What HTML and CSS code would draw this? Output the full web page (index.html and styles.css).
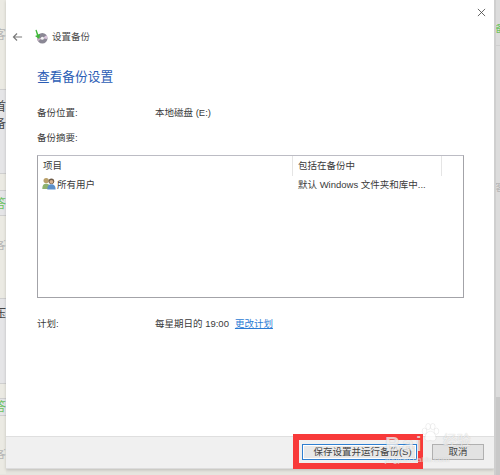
FILE: index.html
```html
<!DOCTYPE html>
<html lang="zh">
<head>
<meta charset="utf-8">
<title>设置备份</title>
<link rel="stylesheet" href="styles.css">
</head>
<body>
<div class="desktop">
  <div class="gutter gutter-left">
    <div class="seg beige h25"></div>
    <div class="seg beige h20 faint"><span>客</span></div>
    <div class="seg beige h45 line"></div>
    <div class="seg grey h8"></div>
    <div class="seg grey h17 dark"><span>首</span></div>
    <div class="seg grey h17 dark"><span>备</span></div>
    <div class="seg grey h42 line"></div>
    <div class="seg beige h17 line"></div>
    <div class="seg grey h5"></div>
    <div class="seg grey h16 green"><span>答</span></div>
    <div class="seg grey h4 line"></div>
    <div class="seg beige h18"></div>
    <div class="seg beige h6"></div>
    <div class="seg beige h10 faint"><span>客</span></div>
    <div class="seg beige h49 line"></div>
    <div class="seg grey h8"></div>
    <div class="seg grey h14 dark"><span>压</span></div>
    <div class="seg grey h63 line"></div>
    <div class="seg beige h15 line"></div>
    <div class="seg grey h16 green"><span>答</span></div>
    <div class="seg grey h1 line"></div>
    <div class="seg beige h33"></div>
    <div class="seg beige h10 faint"><span>客</span></div>
    <div class="seg beige h15"></div>
  </div>

  <main class="dialog">
    <div class="titlebar">
      <svg class="close" viewBox="0 0 10 10" aria-label="关闭"><path d="M1 1l8 8M9 1l-8 8"/></svg>
    </div>
    <header class="nav">
      <svg class="back" viewBox="0 0 12 10" aria-label="返回"><path d="M11 5H2M5.500 1.200L1.600 5l3.900 3.800"/></svg>
      <svg class="backup-icon" viewBox="0 0 14 15" aria-hidden="true">
        <circle cx="8.300" cy="9.300" r="5.200" fill="#8a8794"/>
        <path d="M8.300 9.300L12.500 6.200A5.200 5.200 0 0 1 13.400 10z" fill="#d9c6dc"/>
        <path d="M8.300 9.300L4 12.200A5.200 5.200 0 0 1 3.200 8.600z" fill="#c7b0c4"/>
        <circle cx="8.300" cy="9.300" r="1.500" fill="#f4f4f4"/>
        <path d="M1.400 1l1.500 5.300L1 7l4.200 3 .8-5.300-1.700.9L2.600.7z" fill="#3fb83a"/>
      </svg>
      <span class="nav-title">设置备份</span>
    </header>

    <section class="content">
      <h1 class="heading">查看备份设置</h1>
      <div class="field loc">
        <span class="label">备份位置:</span>
        <span class="value">本地磁盘 (E:)</span>
      </div>
      <div class="field summary"><span class="label">备份摘要:</span></div>

      <div class="listbox">
        <div class="list-head">
          <div class="col col-a">项目</div>
          <div class="col col-b">包括在备份中</div>
          <div class="col col-c"></div>
        </div>
        <div class="list-row">
          <div class="col col-a users">
            <svg class="users-icon" viewBox="0 0 14 13" aria-hidden="true">
              <circle cx="4.200" cy="3.600" r="2.700" fill="#b9a06a"/>
              <path d="M.3 12c0-4 1.600-5.200 3.900-5.200S8 8 8 12z" fill="#8fb26e"/>
              <circle cx="9.400" cy="4.300" r="2.800" fill="#6d5a48"/>
              <circle cx="9.400" cy="4.800" r="1.900" fill="#d3b08e"/>
              <path d="M5.300 12.600c0-4 1.600-5.400 4.100-5.400s4.200 1.400 4.200 5.400z" fill="#5b8fc9"/>
            </svg>
            <span>所有用户</span>
          </div>
          <div class="col col-b">默认 Windows 文件夹和库中...</div>
        </div>
      </div>

      <div class="field plan">
        <span class="label">计划:</span>
        <span class="value">每星期日的 19:00<a class="link" href="#">更改计划</a></span>
      </div>
    </section>

    <footer class="footer">
      <div class="mark">
        <button class="btn btn-primary" type="button">保存设置并运行备份(S)</button>
      </div>
      <button class="btn btn-cancel" type="button">取消</button>
      <div class="watermark">
        <div class="wm-top">
          <span class="wm-latin">Bai</span>
          <svg class="wm-paw" viewBox="0 0 24 24" aria-hidden="true">
            <ellipse cx="6" cy="10" rx="2.600" ry="3.400"/><ellipse cx="10" cy="5" rx="2.600" ry="3.400"/>
            <ellipse cx="15" cy="5" rx="2.600" ry="3.400"/><ellipse cx="19" cy="10" rx="2.600" ry="3.400"/>
            <path d="M12.500 10c-3 0-6 4-6 7.500s3 3.500 6 2.500c3 1 6 1 6-2.500s-3-7.500-6-7.500z"/>
          </svg>
          <span class="wm-cjk">经验</span>
        </div>
        <div class="wm-sub">jingyan.baidu.com</div>
      </div>
    </footer>
  </main>

  <div class="gutter gutter-right">
    <div class="seg rail h24"></div>
    <div class="seg rail h10 green-r"><span>备</span></div>
    <div class="seg rail h12 line"></div>
    <div class="seg rail h137"></div>
    <div class="seg rail h10 faint-r"><span>客</span></div>
    <div class="seg rail h204"></div>
    <div class="seg rail-dark h78"></div>
  </div>
</div>
</body>
</html>
```

FILE: styles.css
```css
* { box-sizing: border-box; }
html, body { margin: 0; padding: 0; }
body {
  width: 500px;
  height: 475px;
  overflow: hidden;
  font-family: "Liberation Sans", "Noto Sans CJK SC", sans-serif;
  font-size: 9.5px;
  color: #3a3a3a;
}

.desktop {
  display: flex;
  align-items: flex-start;
  width: 500px;
  height: 475px;
  background: #e6e5df;
}

/* Page behind the dialog */
.gutter {
  width: 6px;
  height: 475px;
  flex: none;
  overflow: hidden;
}
.gutter-right { border-left: 2px solid #cfcfcf; }
.seg {
  display: flex;
  align-items: center;
  overflow: hidden;
  font-size: 12px;
  line-height: 1;
}
.seg span { flex: none; margin-left: -6px; }
.gutter-right .seg span { margin-left: -1px; font-size: 10px; }
.beige { background: #ebeae3; }
.grey { background: #e5e5e7; }
.rail { background: #dcdcdc; }
.rail-dark { background: #c8c8c8; }
.line { border-bottom: 1px solid #cfcfcf; }
.faint { color: #b5b5b5; }
.dark { color: #444; }
.green { color: #6cc35f; }
.green-r { color: #6cc35f; }
.faint-r { color: #b5b5b5; }
.h1 { height: 1px; }
.h4 { height: 4px; }
.h5 { height: 5px; }
.h6 { height: 6px; }
.h8 { height: 8px; }
.h10 { height: 10px; }
.h12 { height: 12px; }
.h14 { height: 14px; }
.h15 { height: 15px; }
.h16 { height: 16px; }
.h17 { height: 17px; }
.h18 { height: 18px; }
.h20 { height: 20px; }
.h24 { height: 24px; }
.h25 { height: 25px; }
.h33 { height: 33px; }
.h42 { height: 42px; }
.h45 { height: 45px; }
.h49 { height: 49px; }
.h63 { height: 63px; }
.h78 { height: 78px; }
.h137 { height: 137px; }
.h204 { height: 204px; }

/* Dialog */
.dialog {
  width: 488px;
  height: 469px;
  flex: none;
  display: flex;
  flex-direction: column;
  background: #fff;
  box-shadow: 0 1px 3px rgba(0, 0, 0, .18);
}
.titlebar {
  height: 29px;
  flex: none;
  display: flex;
  justify-content: flex-end;
  padding: 8px 8px 0 0;
}
.close { width: 9px; height: 9px; }
.close path { fill: none; stroke: #444; stroke-width: .9; }

.nav {
  height: 15px;
  flex: none;
  display: flex;
  align-items: center;
  padding-left: 6px;
}
.back { width: 11px; height: 10px; flex: none; }
.back path { fill: none; stroke: #7a7a7a; stroke-width: 1.3; }
.backup-icon { width: 14px; height: 15px; flex: none; margin-left: 11px; }
.nav-title { margin-left: 4px; color: #4a4a4a; font-size: 9.5px; line-height: 15px; }

.content {
  flex: 1;
  padding: 24px 30px 0 31px;
}
.heading {
  margin: 0;
  font-size: 12.7px;
  font-weight: 400;
  line-height: 18px;
  color: #2b5db5;
}
.field { display: flex; line-height: 14px; }
.label { width: 118px; flex: none; }
.loc { margin-top: 20px; }
.summary { margin-top: 11px; }
.plan { margin-top: 19px; }
.link {
  margin-left: 6px;
  color: #2b7bd4;
  text-decoration: underline;
}

.listbox {
  width: 427px;
  height: 143px;
  margin-top: 10px;
  border: 1px solid #a3a3a8;
  border-top-color: #bcbcc4;
}
.list-head { display: flex; height: 20px; line-height: 19px; }
.list-row { display: flex; height: 17px; align-items: center; margin-top: -1px; }
.col-a { width: 254px; flex: none; padding-left: 5px; }
.col-b { width: 149px; flex: none; padding-left: 6px; white-space: nowrap; }
.list-head .col-b { border-left: 1px solid #e5e5e5; padding-left: 5px; }
.list-head .col-c { border-left: 1px solid #e5e5e5; }
.users { display: flex; align-items: center; padding-left: 4px; }
.users-icon { width: 14px; height: 13px; flex: none; margin-right: 1px; }

/* Footer */
.footer {
  position: relative;
  height: 33px;
  flex: none;
  display: flex;
  justify-content: flex-end;
  align-items: flex-start;
  padding-right: 10px;
  background: #f0f0f0;
  border-top: 1px solid #dfdfdf;
  border-bottom: 1px solid #dcdcdc;
}
.mark {
  width: 130px;
  height: 35px;
  margin-top: -3px;
  padding: 4px 1px 0 3px;
  border: 6px solid #f83a3a;
  border-right-width: 5px;
}
.btn {
  display: block;
  height: 16px;
  padding: 0;
  font: inherit;
  line-height: 14px;
  color: #444;
  background: #e8e8e8;
}
.btn-primary {
  width: 115px;
  padding-left: 6px;
  border: 1px solid #2f7fd0;
  box-shadow: inset 0 0 0 1px #fff;
}
.btn-cancel {
  width: 52px;
  margin: 7px 0 0 9px;
  border: 1px solid #b0b0b0;
  background: #e2e2e2;
}

/* Site watermark over the corner */
.watermark {
  position: absolute;
  right: 22px;
  top: -15px;
  width: 87px;
  color: rgba(255, 255, 255, .72);
  text-shadow: 0 0 1px rgba(0, 0, 0, .22);
  pointer-events: none;
}
.wm-top { display: flex; align-items: flex-start; height: 32px; }
.wm-latin {
  font-size: 21px;
  font-weight: 700;
  letter-spacing: 2px;
  line-height: 24px;
  margin-top: 10px;
}
.wm-paw {
  width: 22px;
  height: 22px;
  flex: none;
  margin-left: -5px;
  fill: rgba(255, 255, 255, .8);
  stroke: rgba(0, 0, 0, .12);
  stroke-width: .6;
}
.wm-cjk { font-size: 14px; line-height: 16px; margin: 10px 0 0 2px; }
.wm-sub { font-size: 8px; line-height: 10px; margin-top: 1px; white-space: nowrap; }
```
